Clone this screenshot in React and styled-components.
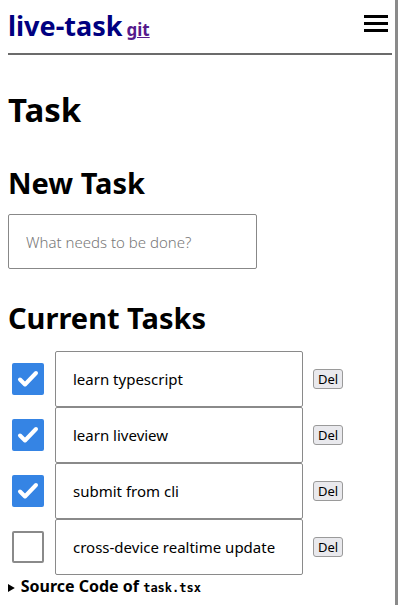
import React from "react";
import styled, { createGlobalStyle } from "styled-components";

const GlobalStyle = createGlobalStyle`
  body {
    margin: 8px;
    font-family: "Noto Sans", "Open Sans", sans-serif;
    color: #000;
    background: #fff;
  }
`;

const Header = styled.header`
  display: flex;
  align-items: flex-start;
  justify-content: space-between;
  height: 45px;
  border-bottom: 2px solid #6b6b6b;
`;

const Brand = styled.div`
  display: flex;
  align-items: baseline;
  gap: 4px;
  margin-top: -1px;
`;

const Title = styled.span`
  color: #000080;
  font-size: 27px;
  font-weight: 700;
`;

const GitLink = styled.a`
  color: #551a8b;
  font-size: 17px;
  font-weight: 700;
`;

const Burger = styled.button`
  display: flex;
  flex-direction: column;
  gap: 4px;
  margin: 7px 4px 0 0;
  padding: 0;
  border: none;
  background: none;
  span {
    display: block;
    width: 24px;
    height: 3px;
    background: #000;
  }
`;

const Drawer = styled.aside`
  position: fixed;
  top: 0;
  bottom: 0;
  left: 395px;
  width: 10px;
  border-left: 3px solid #8a8a8a;
  background: #fff;
`;

const H1 = styled.h1`
  font-size: 33px;
  font-weight: 700;
  margin: 32px 0 0;
`;

const H2 = styled.h2`
  font-size: 29px;
  font-weight: 700;
  margin: ${(p) => p.$top}px 0 0;
`;

const TextInput = styled.input`
  display: block;
  box-sizing: border-box;
  width: 249px;
  height: 55px;
  margin-top: 12px;
  padding: 0 17px;
  border: 1px solid #888;
  border-radius: 2px;
  font-family: "Noto Sans", sans-serif;
  font-size: 15px;
  &::placeholder {
    color: #777;
    font-weight: 300;
  }
`;

const List = styled.ul`
  list-style: none;
  margin: 14px 0 0;
  padding: 0;
`;

const Row = styled.li`
  display: flex;
  align-items: center;
  height: 56px;
`;

const Check = styled.span`
  box-sizing: border-box;
  width: 32px;
  height: 32px;
  margin: 0 11px 0 4px;
  border-radius: 2px;
  display: flex;
  align-items: center;
  justify-content: center;
  background: ${(p) => (p.$on ? "#3584e4" : "#fff")};
  border: ${(p) => (p.$on ? "none" : "2px solid #8a8a8a")};
`;

const TaskBox = styled.div`
  box-sizing: border-box;
  width: 248px;
  height: 56px;
  display: flex;
  align-items: center;
  padding-left: 17px;
  border: 1px solid #8a8a8a;
  border-radius: 2px;
  font-size: 15px;
`;

const DelButton = styled.button`
  margin-left: 10px;
  padding: 1px 4px;
  font-family: "Noto Sans", sans-serif;
  font-size: 13px;
  line-height: 16px;
  color: #000;
  background: #e9e9ed;
  border: 1px solid #9a9a9a;
  border-radius: 3px;
`;

const Details = styled.details`
  margin-top: 0;
  summary {
    font-size: 16px;
    font-weight: 700;
    cursor: pointer;
    &::marker {
      font-size: 12px;
    }
  }
  code {
    font-family: "DejaVu Sans Mono", monospace;
    font-size: 12px;
  }
`;

const tasks = [
  { title: "learn typescript", done: true },
  { title: "learn liveview", done: true },
  { title: "submit from cli", done: true },
  { title: "cross-device realtime update", done: false },
];

const App = () => {
  return (
    <>
      <GlobalStyle />
      <Header>
        <Brand>
          <Title>live-task</Title>
          <GitLink href="#">git</GitLink>
        </Brand>
        <Burger aria-label="menu">
          <span />
          <span />
          <span />
        </Burger>
      </Header>
      <Drawer />
      <H1>Task</H1>
      <H2 $top={31}>New Task</H2>
      <TextInput placeholder="What needs to be done?" />
      <H2 $top={29}>Current Tasks</H2>
      <List>
        {tasks.map((task) => (
          <Row key={task.title}>
            <Check $on={task.done}>
              {task.done && (
                <svg width="24" height="24" viewBox="0 0 24 24">
                  <path
                    d="M4 12.5l5 5L20 6"
                    fill="none"
                    stroke="#fff"
                    strokeWidth="4"
                    strokeLinecap="round"
                    strokeLinejoin="round"
                  />
                </svg>
              )}
            </Check>
            <TaskBox>{task.title}</TaskBox>
            <DelButton>Del</DelButton>
          </Row>
        ))}
      </List>
      <Details>
        <summary>
          Source Code of <code>task.tsx</code>
        </summary>
      </Details>
    </>
  );
};

export default App;
